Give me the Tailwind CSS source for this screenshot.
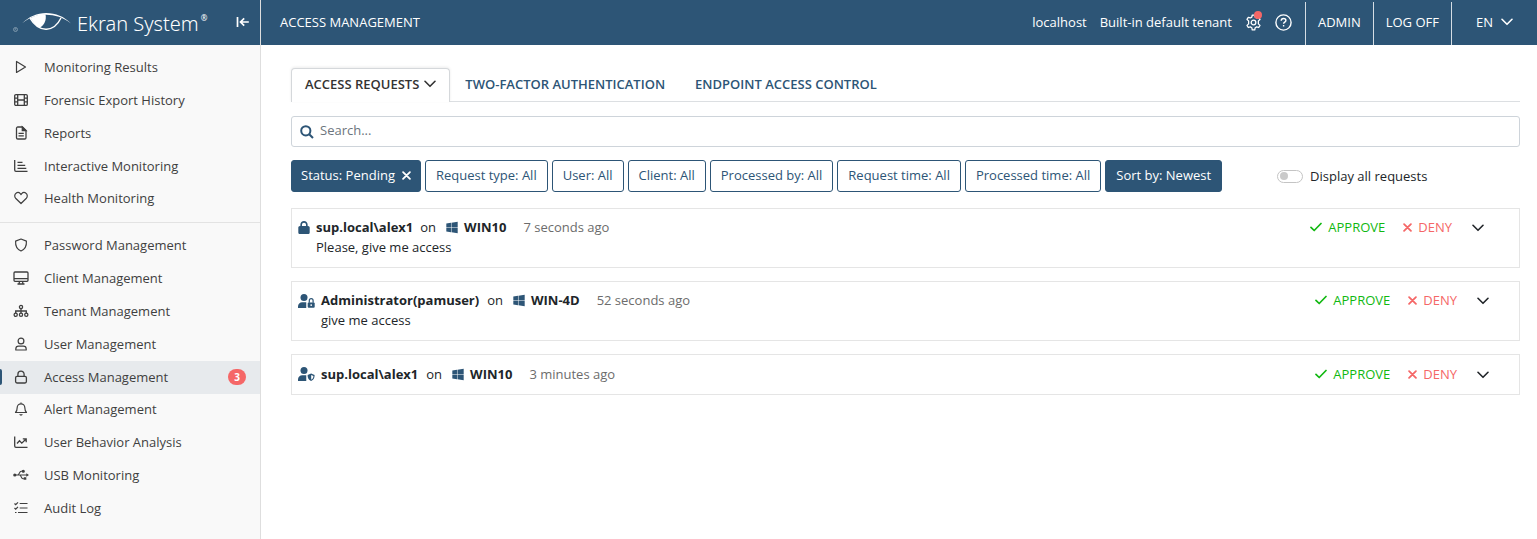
<!DOCTYPE html>
<html lang="en">
<head>
<meta charset="utf-8">
<title>Access Management</title>
<script src="https://cdn.jsdelivr.net/npm/@tailwindcss/browser@4"></script>
</head>
<body class="min-h-screen bg-white font-['Open_Sans',sans-serif] text-[13px] leading-5 text-[#212529]">

<svg class="hidden" aria-hidden="true">
  <symbol id="chevron" viewBox="0 0 12 8"><path d="M1 1.3 6 6.3 11 1.3" fill="none" stroke="currentColor" stroke-width="1.6" stroke-linecap="round" stroke-linejoin="round"/></symbol>
  <symbol id="cross" viewBox="0 0 10 10"><path d="M1.2 1.2l7.600 7.600M8.800 1.200 1.200 8.800" fill="none" stroke="currentColor" stroke-width="2" stroke-linecap="round"/></symbol>
  <symbol id="check" viewBox="0 0 12 10"><path d="M1 5.4 4.2 8.500 11 1.500" fill="none" stroke="currentColor" stroke-width="1.700" stroke-linecap="round" stroke-linejoin="round"/></symbol>
  <symbol id="windows" viewBox="0 0 448 512"><path fill="currentColor" d="M0 93.7l183.6-25.3v177.4H0V93.7zm0 324.6l183.6 25.3V268.4H0v149.9zm203.8 28L448 480V268.4H203.8v177.900zm0-380.600v180.100H448V32L203.800 65.700z"/></symbol>
  <symbol id="person" viewBox="0 0 17 14"><circle cx="6" cy="3.6" r="3.5" fill="currentColor"/><path d="M0 14v-1.600a4.200 4.200 0 0 1 4.200-4.200h4.300v5.800z" fill="currentColor"/></symbol>
</svg>

<div class="flex min-h-screen">
  <aside class="flex w-[261px] shrink-0 flex-col border-r border-[#dedede] bg-[#f9f9f9] text-[#3f3f3f]">
    <div class="flex h-[45px] items-center bg-[#2d5576] pb-[2px] pl-3 pr-[10px] text-white">
      <svg class="h-6 w-[60px] shrink-0" viewBox="0 0 60 24" fill="none" aria-hidden="true">
        <circle cx="3.500" cy="19.500" r="2" stroke="#8ca3b5" stroke-width=".8"/><path d="M3 20.500v-2h1l.3.600-.8.400.9 1" stroke="#8ca3b5" stroke-width=".5"/>
        <path d="M10 13.500C17 6.500 25 3 34 3c10 0 18 3.500 25 10.500C51 7.500 43 4.800 34 4.800 25 4.600 17 7.500 10 13.500z" fill="#fff"/>
        <path d="M18.500 8C23 5.200 28 4 33.500 4.200c1.200 5.500-1.200 11.500-6 13.500-3.500-1.500-6.500-5.700-9-9.700z" fill="#fff"/>
        <path d="M18 8.200c5 8.300 10 11.300 16.500 11 6.500-.300 11-4 14.500-11.200" stroke="#fff" stroke-width="1.400"/>
      </svg>
      <div class="ml-[5px] flex items-start pt-1 font-['Noto_Sans','Open_Sans',sans-serif]">
        <span class="text-[20px] leading-6 font-light">Ekran System</span><span class="ml-[2px] pt-[2px] text-[8px] leading-2">®</span>
      </div>
      <button type="button" class="ml-auto" aria-label="Collapse menu"><svg class="h-3 w-[14px]" viewBox="0 0 14 12" fill="none" stroke="currentColor" stroke-width="1.700"><path d="M1.500 1v10M12.800 6H5M8.200 2.300 4.500 6l3.700 3.700"/></svg></button>
    </div>

    <nav class="pt-[6px]">
      <ul class="border-b border-[#e3e3e3] pb-[6px] *:h-[33px]">
        <li><a href="#" class="flex h-full items-center gap-[15px] pb-[2px] pl-[13px]"><svg class="size-4" viewBox="0 0 16 16" fill="none" stroke="currentColor" stroke-width="1.200"><path d="M3.500 2.500v11L12.500 8z" stroke-linejoin="round"/></svg>Monitoring Results</a></li>
        <li><a href="#" class="flex h-full items-center gap-[15px] pb-[2px] pl-[13px]"><svg class="size-4" viewBox="0 0 16 16" fill="none" stroke="currentColor" stroke-width="1.300"><rect x="1.700" y="2.600" width="12.600" height="10.800" rx="1.200"/><path d="M4.700 2.600v10.800M11.300 2.600v10.800M4.700 8h6.600M1.700 6.100h3M1.700 9.800h3M11.300 6.100h3M11.300 9.800h3"/></svg>Forensic Export History</a></li>
        <li><a href="#" class="flex h-full items-center gap-[15px] pb-[2px] pl-[13px]"><svg class="size-4" viewBox="0 0 16 16" fill="none" stroke="currentColor" stroke-width="1.300"><path d="M9.500 2H4.800A1.300 1.300 0 0 0 3.500 3.300v9.400A1.300 1.300 0 0 0 4.800 14h6.900a1.300 1.300 0 0 0 1.300-1.300V5.500z" stroke-linejoin="round"/><path d="M9.300 2v3.700H13z" fill="currentColor"/><path d="M5.500 8.300h5.300M5.500 10.800h5.300"/></svg>Reports</a></li>
        <li><a href="#" class="flex h-full items-center gap-[15px] pb-[2px] pl-[13px]"><svg class="size-4" viewBox="0 0 16 16" fill="none" stroke="currentColor" stroke-width="1.300"><path d="M1.700 2v10a1.300 1.300 0 0 0 1.300 1.300h11.500M4.500 4.300h5M4.500 7.300h7.700M4.500 10.300h8.800"/></svg>Interactive Monitoring</a></li>
        <li><a href="#" class="flex h-full items-center gap-[15px] pb-[3px] pl-[13px]"><svg class="size-4" viewBox="0 0 16 16" fill="none" stroke="currentColor" stroke-width="1.200"><path d="M8 13.500 2.600 8.200C1.300 6.800 1.500 4.400 3 3.300c1.400-1.100 3.300-.7 4.300.4l.7.800.7-.8c1-1.100 2.900-1.500 4.300-.4 1.500 1.100 1.700 3.500.4 4.900z" stroke-linejoin="round"/></svg>Health Monitoring</a></li>
      </ul>
      <ul class="pt-[6px] *:h-[33px]">
        <li><a href="#" class="flex h-full items-center gap-[15px] pb-[2px] pl-[13px]"><svg class="size-4" viewBox="0 0 16 16" fill="none" stroke="currentColor" stroke-width="1.200"><path d="M8 2 2.600 4.100C2.300 8.500 4 12.300 8 14c4-1.700 5.700-5.500 5.400-9.900z" stroke-linejoin="round"/></svg>Password Management</a></li>
        <li><a href="#" class="flex h-full items-center gap-[15px] pb-[2px] pl-[13px]"><svg class="size-4" viewBox="0 0 16 16" fill="none" stroke="currentColor" stroke-width="1.300"><rect x="1" y="2" width="14" height="9.300" rx="1"/><path d="M1 8.700h14M6.500 11.300 6 14M9.500 11.300 10 14M4.500 14h7"/></svg>Client Management</a></li>
        <li><a href="#" class="flex h-full items-center gap-[15px] pb-[2px] pl-[13px]"><svg class="size-4" viewBox="0 0 16 16" fill="none" stroke="currentColor" stroke-width="1.300"><circle cx="8" cy="4" r="1.600"/><circle cx="2.700" cy="11.800" r="1.600"/><circle cx="8" cy="11.800" r="1.600"/><circle cx="13.300" cy="11.800" r="1.600"/><path d="M8 5.500v4.800M2.700 10.300V8h10.600v2.300"/></svg>Tenant Management</a></li>
        <li><a href="#" class="flex h-full items-center gap-[15px] pb-[2px] pl-[13px]"><svg class="size-4" viewBox="0 0 16 16" fill="none" stroke="currentColor" stroke-width="1.200"><circle cx="8" cy="5" r="2.900"/><path d="M2.800 14v-1c0-1.600 1.200-2.800 2.800-2.800h4.800c1.600 0 2.800 1.200 2.800 2.800v1z" stroke-linejoin="round"/></svg>User Management</a></li>
        <li class="bg-[#e7eaed]"><a href="#" aria-current="page" class="relative flex h-full items-center gap-[15px] pr-[14px] pb-[2px] pl-[13px] before:absolute before:left-0 before:h-4 before:w-[2px] before:rounded-r before:bg-[#2d5576]"><svg class="size-4" viewBox="0 0 16 16" fill="none" stroke="currentColor" stroke-width="1.300"><rect x="2.600" y="7.300" width="10.800" height="6.700" rx="1.400"/><path d="M4.900 7.300V5.200a3.100 3.100 0 0 1 6.200 0v2.100"/></svg>Access Management<span class="ml-auto flex h-4 w-[18px] items-center justify-center rounded-full bg-[#f56767] text-[10px] leading-4 font-bold text-white">3</span></a></li>
        <li><a href="#" class="flex h-full items-center gap-[15px] pb-[3px] pl-[13px]"><svg class="size-4" viewBox="0 0 16 16" fill="none" stroke="currentColor" stroke-width="1.200"><path d="M8 1.500v1.300M2.500 11.500c1.400-1.400 1.700-2.700 1.700-4.900a3.800 3.800 0 0 1 7.600 0c0 2.200.3 3.500 1.700 4.900z" stroke-linejoin="round"/><path d="M6.700 13.300a1.500 1.500 0 0 0 2.600 0"/></svg>Alert Management</a></li>
        <li><a href="#" class="flex h-full items-center gap-[15px] pb-[3px] pl-[13px]"><svg class="size-4" viewBox="0 0 16 16" fill="none" stroke="currentColor" stroke-width="1.300"><path d="M1.700 2.500v9.500A1.300 1.300 0 0 0 3 13.300h11.500M4 9.500l2.500-2.700 2.300 2.300 4-3.900M9.800 4.800h3.400v3.400"/></svg>User Behavior Analysis</a></li>
        <li><a href="#" class="flex h-full items-center gap-[15px] pb-[3px] pl-[13px]"><svg class="size-4" viewBox="0 0 16 16" fill="none" stroke="currentColor" stroke-width="1.100"><circle cx="1.800" cy="8" r="1.600" fill="currentColor" stroke="none"/><path d="M2 8h12M4.500 8c1.800 0 1.800-3.700 3.700-3.700h1.600M6.500 8c1.800 0 1.500 3.700 3.500 3.700h1"/><circle cx="10.300" cy="4.300" r="1" fill="currentColor"/><path d="M10.800 10.200h2.500v2.500h-2.500zM13.300 6.300v3.400L16 8z" fill="currentColor" stroke="none"/></svg>USB Monitoring</a></li>
        <li><a href="#" class="flex h-full items-center gap-[15px] pb-[3px] pl-[13px]"><svg class="size-4" viewBox="0 0 16 16" fill="none" stroke="currentColor" stroke-width="1.200"><path d="M6.700 3.500h7.800M6.700 8h7.800M5 12.500h9.500M1.500 3.500l1.200 1.200L5 2.300M1.500 8l1.200 1.200L5 6.800M2 12.500h1.500"/></svg>Audit Log</a></li>
      </ul>
    </nav>
  </aside>

  <div class="flex min-w-0 flex-1 flex-col">
    <header class="flex h-[45px] items-center bg-[#2d5576] pl-[19px] text-white">
      <h1 class="pb-[2px]">ACCESS MANAGEMENT</h1>
      <span class="ml-auto pb-[2px]">localhost</span>
      <span class="ml-[13px] pb-[2px]">Built-in default tenant</span>
      <button type="button" class="relative ml-[13px]" aria-label="Settings">
        <svg class="size-[17px]" viewBox="0 0 16 16" fill="none" stroke="currentColor" stroke-width="1.200" stroke-linejoin="round"><path d="M6.800 1h2.400l.4 1.900 1.400.8 1.900-.6 1.200 2-1.500 1.400v2.800l1.500 1.400-1.200 2-1.900-.6-1.400.8-.4 2.100H6.800l-.4-2.100-1.400-.8-1.900.6-1.200-2 1.500-1.400V6.500L1.900 5.100l1.200-2 1.900.6 1.400-.8z"/><circle cx="8" cy="8" r="2.200"/></svg>
        <span class="absolute -top-[3px] right-0 size-2 rounded-full bg-[#f56767]"></span>
      </button>
      <button type="button" class="ml-[13px]" aria-label="Help"><svg class="size-[17px]" viewBox="0 0 17 17" fill="none" stroke="currentColor" stroke-width="1.400"><circle cx="8.500" cy="8.500" r="7.600"/><path d="M6.200 6.700c0-1.300.9-2.200 2.300-2.200s2.400.8 2.400 2c0 1.600-2.300 1.700-2.300 3.200M8.600 11v1.600"/></svg></button>
      <div class="ml-[13px] flex self-stretch pt-[2px] *:pb-1">
        <button type="button" class="border-l border-[#d5dde4] px-3">ADMIN</button>
        <button type="button" class="border-l border-[#d5dde4] px-3">LOG OFF</button>
        <button type="button" class="flex items-center gap-2 border-l border-[#d5dde4] pl-6 pr-6">EN<svg class="h-2 w-3"><use href="#chevron"/></svg></button>
      </div>
    </header>

    <main class="pt-[23px] pr-[17px] pl-[30px]">
      <div role="tablist" class="flex h-[34px] border-b border-[#dcdfe2] font-semibold text-[#2d5576]">
        <button type="button" role="tab" aria-selected="true" class="-mb-px flex items-center gap-[5px] rounded-t border border-b-0 border-[#d5d8db] bg-white px-[13px] pb-[3px] text-[#333] shadow-[0_-1px_3px_rgba(0,0,0,0.08)]">ACCESS REQUESTS<svg class="h-2 w-3"><use href="#chevron"/></svg></button>
        <button type="button" role="tab" aria-selected="false" class="px-[15px] pb-[2px]">TWO-FACTOR AUTHENTICATION</button>
        <button type="button" role="tab" aria-selected="false" class="px-[15px] pb-[2px]">ENDPOINT ACCESS CONTROL</button>
      </div>

      <label class="mt-[14px] flex h-[31px] items-center gap-[6px] rounded-[3px] border border-[#ced4da] px-2">
        <svg class="size-[14px] text-[#2d5576]" viewBox="0 0 14 14" fill="none" stroke="currentColor" stroke-width="2" aria-hidden="true"><circle cx="5.800" cy="5.800" r="4.600"/><path d="M9.200 9.200 13 13"/></svg>
        <input type="text" aria-label="Search" placeholder="Search..." class="mb-1 min-w-0 flex-1 outline-none placeholder:text-[#6c757d]">
      </label>

      <div class="mt-[13px] flex items-center gap-1 text-[#2d5576] [&>button]:pb-[2px]">
        <button type="button" class="flex h-8 items-center gap-[7px] rounded-[3px] border border-[#2d5576] bg-[#2d5576] px-[9px] text-white">Status: Pending<svg class="size-[9px]"><use href="#cross"/></svg></button>
        <button type="button" class="h-8 rounded-[3px] border border-[#2d5576] px-[10px]">Request type: All</button>
        <button type="button" class="h-8 rounded-[3px] border border-[#2d5576] px-[10px]">User: All</button>
        <button type="button" class="h-8 rounded-[3px] border border-[#2d5576] px-[10px]">Client: All</button>
        <button type="button" class="h-8 rounded-[3px] border border-[#2d5576] px-[10px]">Processed by: All</button>
        <button type="button" class="h-8 rounded-[3px] border border-[#2d5576] px-[10px]">Request time: All</button>
        <button type="button" class="h-8 rounded-[3px] border border-[#2d5576] px-[10px]">Processed time: All</button>
        <button type="button" class="h-8 rounded-[3px] border border-[#2d5576] bg-[#2d5576] px-[10px] text-white">Sort by: Newest</button>
        <label class="ml-[51px] flex items-center gap-[7px] text-[#212529]"><input type="checkbox" role="switch" class="flex h-[13px] w-[26px] appearance-none items-center rounded-full border border-[#c4c4c4] bg-white px-[2px] before:size-2 before:rounded-full before:bg-[#cacaca]">Display all requests</label>
      </div>

      <div class="mt-4 flex flex-col gap-[13px]">
        <article class="flex items-start border border-[#e5e5e5] pt-2 pr-[35px] pb-[10px] pl-[6px]">
          <svg class="mt-1 h-[13px] w-3 text-[#2d5576]" viewBox="0 0 448 512" fill="currentColor" aria-hidden="true"><path d="M144 144v48H304V144c0-44.200-35.800-80-80-80s-80 35.800-80 80zM80 192V144C80 64.500 144.500 0 224 0s144 64.500 144 144v48h16c35.300 0 64 28.700 64 64V448c0 35.300-28.700 64-64 64H64c-35.300 0-64-28.700-64-64V256c0-35.300 28.700-64 64-64H80z"/></svg>
          <div class="ml-[6px] flex-1">
            <div class="flex items-center"><b class="font-bold">sup.local\alex1</b><span class="ml-[7px]">on</span><svg class="ml-[10px] h-[13px] w-3 text-[#2d5576]"><use href="#windows"/></svg><b class="ml-[6px] font-bold">WIN10</b><span class="ml-[17px] text-[#6c6c6c]">7 seconds ago</span></div>
            <p>Please, give me access</p>
          </div>
          <button type="button" class="flex items-center gap-[6px] text-[#11b811]"><svg class="h-[10px] w-3"><use href="#check"/></svg>APPROVE</button>
          <button type="button" class="ml-[18px] flex items-center gap-[6px] text-[#f56767]"><svg class="size-[9px]"><use href="#cross"/></svg>DENY</button>
          <button type="button" class="ml-5 flex h-5 items-center pt-[2px]" aria-label="Expand"><svg class="h-2 w-3"><use href="#chevron"/></svg></button>
        </article>
        <article class="flex items-start border border-[#e5e5e5] pt-2 pr-[30px] pb-[10px] pl-[6px]">
          <svg class="mt-1 h-[14px] w-[17px] text-[#2d5576]" viewBox="0 0 17 14" aria-hidden="true"><use href="#person"/><rect x="8.500" y="6.500" width="8.500" height="7.500" fill="#fff"/><rect x="9.700" y="8.600" width="7" height="5.200" rx="1" fill="currentColor"/><path d="M11.300 8.800V6.500a1.900 1.900 0 0 1 3.800 0v2.300" fill="none" stroke="currentColor" stroke-width="1.200"/><circle cx="13.200" cy="11.100" r=".9" fill="#fff"/></svg>
          <div class="ml-[6px] flex-1">
            <div class="flex items-center"><b class="font-bold">Administrator(pamuser)</b><span class="ml-2">on</span><svg class="ml-[10px] h-[13px] w-3 text-[#2d5576]"><use href="#windows"/></svg><b class="ml-[6px] font-bold">WIN-4D</b><span class="ml-[17px] text-[#6c6c6c]">52 seconds ago</span></div>
            <p>give me access</p>
          </div>
          <button type="button" class="flex items-center gap-[6px] text-[#11b811]"><svg class="h-[10px] w-3"><use href="#check"/></svg>APPROVE</button>
          <button type="button" class="ml-[18px] flex items-center gap-[6px] text-[#f56767]"><svg class="size-[9px]"><use href="#cross"/></svg>DENY</button>
          <button type="button" class="ml-5 flex h-5 items-center pt-[2px]" aria-label="Expand"><svg class="h-2 w-3"><use href="#chevron"/></svg></button>
        </article>
        <article class="flex items-start border border-[#e5e5e5] pt-[9px] pr-[30px] pb-[10px] pl-[6px]">
          <svg class="mt-[3px] h-[14px] w-[17px] text-[#2d5576]" viewBox="0 0 17 14" aria-hidden="true"><use href="#person"/><path d="M13 5.500l4 1.500v7H8.500V7z" fill="#fff"/><path d="M13.100 6.600l3.500 1.400c.1 2.900-1 5-3.500 6-2.500-1-3.600-3.100-3.500-6z" fill="currentColor"/><path d="M13.200 8v4.700c1.500-.8 2.200-2 2.200-3.800z" fill="#fff"/></svg>
          <div class="ml-[6px] flex-1">
            <div class="flex items-center"><b class="font-bold">sup.local\alex1</b><span class="ml-2">on</span><svg class="ml-[10px] h-[13px] w-3 text-[#2d5576]"><use href="#windows"/></svg><b class="ml-[6px] font-bold">WIN10</b><span class="ml-[17px] text-[#6c6c6c]">3 minutes ago</span></div>
          </div>
          <button type="button" class="flex items-center gap-[6px] text-[#11b811]"><svg class="h-[10px] w-3"><use href="#check"/></svg>APPROVE</button>
          <button type="button" class="ml-[18px] flex items-center gap-[6px] text-[#f56767]"><svg class="size-[9px]"><use href="#cross"/></svg>DENY</button>
          <button type="button" class="ml-5 flex h-5 items-center pt-[2px]" aria-label="Expand"><svg class="h-2 w-3"><use href="#chevron"/></svg></button>
        </article>
      </div>
    </main>
  </div>
</div>
</body>
</html>
